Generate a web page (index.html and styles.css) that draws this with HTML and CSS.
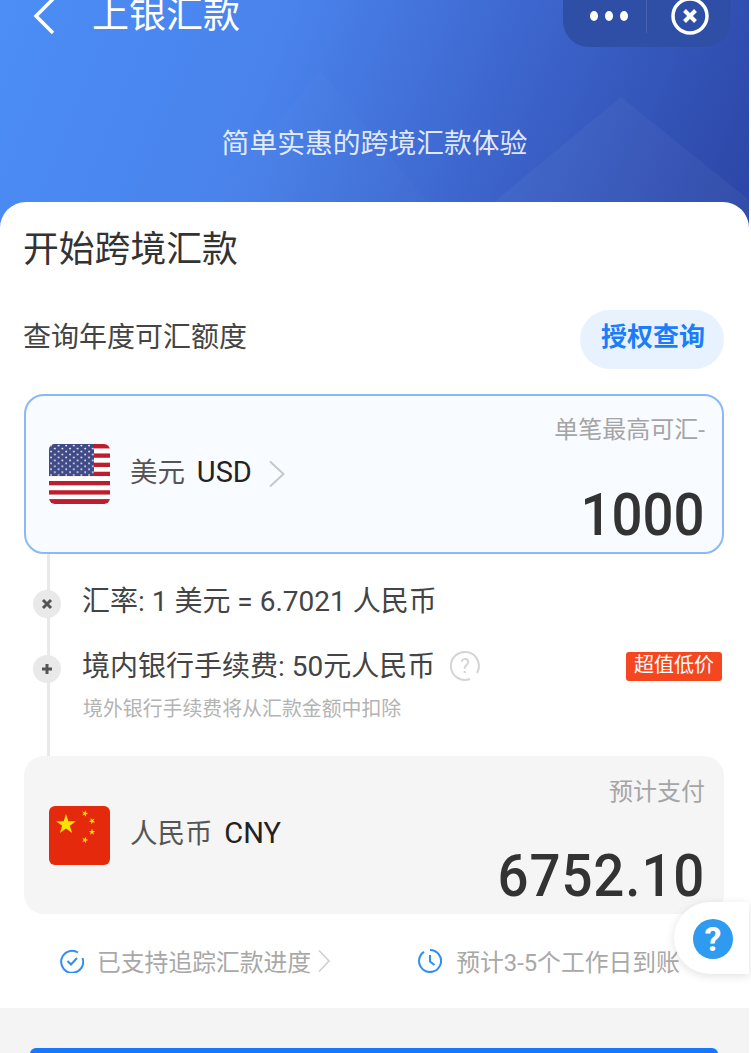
FILE: index.html
```html
<!DOCTYPE html>
<html lang="zh-CN">
<head>
  <meta charset="UTF-8">
  <meta name="viewport" content="width=device-width, initial-scale=1.0">
  <title>上银汇款</title>
  <link rel="stylesheet" href="styles.css">
</head>
<body>
<div class="page">
  <header class="hero">
    <svg class="hero-bg" width="749" height="230" viewBox="0 0 749 230">
      <polygon points="621,97 460,230 749,230 749,200" fill="#ffffff" fill-opacity="0.04"/>
      <polygon points="320,70 190,230 450,230" fill="#ffffff" fill-opacity="0.015"/>
    </svg>
    <div class="nav">
      <svg class="back" width="24" height="38" viewBox="0 0 24 38">
        <path d="M21 2 L4 19 L21 36" fill="none" stroke="#fff" stroke-width="3.5"/>
      </svg>
      <div class="nav-title">上银汇款</div>
      <div class="capsule">
        <div class="capsule-more"><i></i><i></i><i></i></div>
        <div class="capsule-line"></div>
        <svg class="capsule-close" width="40" height="40" viewBox="0 0 40 40">
          <circle cx="20" cy="20" r="17" fill="none" stroke="#fff" stroke-width="3.5"/>
          <path d="M14.5 14.5 L25.5 25.5 M25.5 14.5 L14.5 25.5" stroke="#fff" stroke-width="4"/>
        </svg>
      </div>
    </div>
    <div class="slogan">简单实惠的跨境汇款体验</div>
  </header>

  <main class="sheet">
    <h1 class="sheet-title">开始跨境汇款</h1>
    <div class="quota-row">
      <span class="quota-text">查询年度可汇额度</span>
      <button class="pill" type="button"><span>授权查询</span></button>
    </div>

    <section class="currency-card currency-card-from">
      <div class="currency">
        <svg class="flag" width="61" height="60" viewBox="0 0 61 61" preserveAspectRatio="none">
          <defs>
            <clipPath id="usClip"><rect width="61" height="61" rx="6"/></clipPath>
            <pattern id="stars" width="7.6" height="6" patternUnits="userSpaceOnUse">
              <circle cx="2" cy="1.6" r="0.95" fill="#fff"/>
              <circle cx="5.8" cy="4.6" r="0.95" fill="#fff"/>
            </pattern>
          </defs>
          <g clip-path="url(#usClip)">
            <rect width="61" height="61" fill="#fff"/>
            <rect y="0" width="61" height="4.5" fill="#bd1e2e"/>
            <rect y="9.6" width="61" height="4.4" fill="#bd1e2e"/>
            <rect y="19" width="61" height="4.4" fill="#bd1e2e"/>
            <rect y="28.2" width="61" height="4.4" fill="#bd1e2e"/>
            <rect y="37.6" width="61" height="4.4" fill="#bd1e2e"/>
            <rect y="47" width="61" height="4.4" fill="#bd1e2e"/>
            <rect y="56" width="61" height="5" fill="#bd1e2e"/>
            <rect width="45" height="32.5" fill="#3f4a87"/>
            <rect width="45" height="32.5" fill="url(#stars)"/>
          </g>
        </svg>
        <span class="currency-name">美元 <b>USD</b></span>
        <svg class="chevron" width="18" height="28" viewBox="0 0 18 28">
          <path d="M2 1.5 L15.5 14 L2 26.5" fill="none" stroke="#c8c8c8" stroke-width="2"/>
        </svg>
      </div>
      <div class="amount-box">
        <div class="amount-label">单笔最高可汇-</div>
        <div class="amount">1000</div>
      </div>
    </section>

    <section class="rates">
      <div class="rate-row rate-row-first">
        <span class="dot">
          <svg width="14" height="14" viewBox="0 0 14 14"><path d="M3 3 L11 11 M11 3 L3 11" stroke="#555" stroke-width="3"/></svg>
        </span>
        <span class="rate-text">汇率: 1 美元 = 6.7021 人民币</span>
      </div>
      <div class="rate-row">
        <span class="dot">
          <svg width="14" height="14" viewBox="0 0 14 14"><path d="M7 2 V12 M2 7 H12" stroke="#555" stroke-width="3"/></svg>
        </span>
        <span class="rate-text">境内银行手续费: 50元人民币</span>
        <svg class="q-icon" width="32" height="32" viewBox="0 0 32 32">
          <path d="M21 29 A14 14 0 1 1 28 23" fill="none" stroke="#d4d4d4" stroke-width="2"/>
          <text x="16" y="23" text-anchor="middle" class="q-text">?</text>
        </svg>
        <span class="badge">超值低价</span>
      </div>
      <div class="rate-note">境外银行手续费将从汇款金额中扣除</div>
    </section>

    <section class="currency-card currency-card-to">
      <div class="currency">
        <svg class="flag" width="61" height="59" viewBox="0 0 61 59">
          <defs>
            <polygon id="cnStar" points="0,-1 0.225,-0.31 0.95,-0.31 0.36,0.12 0.59,0.81 0,0.38 -0.59,0.81 -0.36,0.12 -0.95,-0.31 -0.225,-0.31"/>
          </defs>
          <rect width="61" height="59" rx="6" fill="#e5290c"/>
          <g fill="#fde200">
            <use href="#cnStar" transform="translate(17 18.5) scale(10.5)"/>
            <use href="#cnStar" transform="translate(36 7.5) scale(3.4) rotate(20)"/>
            <use href="#cnStar" transform="translate(43 15) scale(3.4) rotate(45)"/>
            <use href="#cnStar" transform="translate(43 26) scale(3.4)"/>
            <use href="#cnStar" transform="translate(36 34) scale(3.4) rotate(20)"/>
          </g>
        </svg>
        <span class="currency-name">人民币 <b>CNY</b></span>
      </div>
      <div class="amount-box">
        <div class="amount-label">预计支付</div>
        <div class="amount">6752.10</div>
      </div>
    </section>

    <div class="notes">
      <div class="note note-track">
        <svg width="24" height="24" viewBox="0 0 24 24">
          <path d="M18 3.5 A11 11 0 1 0 22.5 9" fill="none" stroke="#2f8ff0" stroke-width="2"/>
          <path d="M7.5 12 L11 15.5 L17 9" fill="none" stroke="#2f8ff0" stroke-width="2"/>
        </svg>
        <span>已支持追踪汇款进度</span>
        <svg width="14" height="24" viewBox="0 0 14 24">
          <path d="M2 1.5 L12 12 L2 22.5" fill="none" stroke="#cfcfcf" stroke-width="1.6"/>
        </svg>
      </div>
      <div class="note note-time">
        <svg width="24" height="24" viewBox="0 0 24 24">
          <path d="M6 2.8 A11 11 0 1 0 12 1 A11 11 0 0 1 19 3.5" fill="none" stroke="#2f8ff0" stroke-width="2"/>
          <path d="M12 6 V12.5 L16.5 16" fill="none" stroke="#2f8ff0" stroke-width="2"/>
        </svg>
        <span>预计3-5个工作日到账</span>
      </div>
    </div>
  </main>

  <div class="help">
    <span class="help-icon">?</span>
  </div>

  <footer class="footer">
    <div class="submit"></div>
  </footer>
</div>
</body>
</html>
```

FILE: styles.css
```css
* {
  box-sizing: border-box;
}
html, body {
  margin: 0;
  padding: 0;
}
body {
  font-family: Roboto, "Noto Sans CJK SC", sans-serif;
  background-color: #fff;
  color: #333;
}
.page {
  position: relative;
  width: 751px;
  height: 1053px;
  overflow: hidden;
  background-color: #fff;
}

/* top banner */
.hero {
  position: relative;
  width: 749px;
  height: 230px;
  background: linear-gradient(112deg, #4c8df6 0%, #4a83ec 35%, #3b62c9 68%, #2b45a5 100%);
  color: #fff;
  overflow: hidden;
}
.hero-bg {
  position: absolute;
  left: 0;
  top: 0;
}
.nav {
  position: relative;
  display: flex;
  align-items: center;
  height: 52px;
  margin-top: -10px;
  padding: 0 18px 0 32px;
}
.nav-title {
  margin-left: 36px;
  font-size: 37px;
  line-height: 52px;
  font-weight: 400;
}
.capsule {
  display: flex;
  align-items: center;
  width: 168px;
  height: 62px;
  margin-left: auto;
  padding-left: 27px;
  background-color: #2f4fa6;
  border-radius: 0 0 26px 26px;
}
.capsule-more {
  display: flex;
  gap: 7px;
}
.capsule-more i {
  display: block;
  width: 8px;
  height: 10px;
  border-radius: 50%;
  background-color: #fff;
}
.capsule-line {
  width: 1px;
  height: 34px;
  margin: 0 23px 0 18px;
  background-color: rgba(255, 255, 255, 0.12);
}
.capsule-close {
  flex: none;
}
.slogan {
  position: relative;
  margin-top: 84px;
  text-align: center;
  font-size: 27.8px;
  line-height: 36px;
  color: rgba(255, 255, 255, 0.85);
}

/* white sheet */
.sheet {
  position: relative;
  width: 749px;
  height: 806px;
  margin-top: -28px;
  padding: 26px 25px 0 24px;
  background-color: #fff;
  border-radius: 26px 26px 0 0;
}
.sheet-title {
  margin: 0 0 0 -1px;
  font-size: 35.8px;
  line-height: 44px;
  font-weight: 400;
  color: #333;
}
.quota-row {
  display: flex;
  justify-content: space-between;
  align-items: center;
  margin-top: 38px;
  font-size: 28px;
  color: #444;
}
.quota-text {
  margin: 0 0 10px -1px;
}
.pill {
  width: 144px;
  height: 59px;
  padding: 0 0 10px 2px;
  border: none;
  border-radius: 30px;
  background-color: #e8f2ff;
  color: #1b7dfa;
  font-family: inherit;
  font-size: 26px;
  font-weight: 700;
}

.currency-card {
  display: flex;
  justify-content: space-between;
  align-items: center;
  height: 160px;
  border-radius: 20px;
  padding: 0 19px 0 25px;
}
.currency-card-from {
  margin-top: 25px;
  border: 2px solid #8ab9fb;
  background-color: #f8fbff;
  padding: 0 17px 0 23px;
}
.currency-card-to {
  height: 158px;
  background-color: #f5f5f5;
}
.currency {
  display: flex;
  align-items: center;
}
.flag {
  display: block;
  flex: none;
}
.currency-name {
  margin: 0 0 8px 20px;
  font-size: 27.5px;
  color: #555;
}
.currency-name b {
  margin-left: 5px;
  font-size: 29px;
  font-weight: 400;
  color: #222;
}
.chevron {
  margin: 0 0 0 16px;
}
.amount-box {
  align-self: flex-start;
  padding-top: 19px;
  text-align: right;
}
.amount-label {
  font-size: 24px;
  line-height: 30px;
  color: #a5a5a5;
}
.amount {
  margin-top: 40px;
  font-size: 60px;
  line-height: 60px;
  font-weight: 500;
  color: #333;
  transform: scaleX(0.91);
  transform-origin: right center;
}
.currency-card-to .amount-box {
  padding-top: 21px;
}
.currency-card-to .amount {
  margin-top: 39px;
  letter-spacing: 1px;
}

/* rate timeline */
.rates {
  position: relative;
  height: 202px;
  padding-left: 9px;
  padding-top: 28px;
  font-size: 28px;
  color: #444;
}
.rates::before {
  content: "";
  position: absolute;
  left: 23px;
  top: 0;
  bottom: 0;
  width: 3px;
  background-color: #e9e9e9;
}
.rate-row {
  position: relative;
  display: flex;
  align-items: center;
  height: 40px;
  margin-top: 25px;
}
.rate-row-first {
  margin-top: 0;
}
.rate-text {
  margin-bottom: 1px;
  line-height: 36px;
}
.dot {
  display: flex;
  align-items: center;
  justify-content: center;
  width: 28px;
  height: 28px;
  margin: 4px 21px 0 0;
  border-radius: 50%;
  background-color: #e9e9e9;
}
.q-icon {
  margin: 0 0 2px 14px;
}
.q-text {
  font-size: 20px;
  fill: #d4d4d4;
}
.badge {
  margin: -1px 2px 0 auto;
  width: 96px;
  height: 29px;
  border-radius: 3px;
  background-color: #f4471f;
  color: #fff;
  font-size: 20px;
  line-height: 27px;
  text-align: center;
}
.rate-note {
  margin-top: 9px;
  padding-left: 50px;
  font-size: 19.9px;
  line-height: 28px;
  color: #b3b3b3;
}

/* bottom notes */
.notes {
  display: flex;
  align-items: center;
  height: 94px;
  padding-left: 36px;
  font-size: 23.8px;
  color: #a8a8a8;
}
.note {
  display: flex;
  align-items: center;
  white-space: nowrap;
}
.note span {
  margin: 0 6px 2px 14px;
}
.note-track span {
  margin-left: 13px;
}
.note-time {
  margin-left: 87px;
}

.help {
  position: absolute;
  left: 674px;
  top: 902px;
  width: 75px;
  height: 72px;
  padding: 17px 0 0 19px;
  border-radius: 36px 0 0 36px;
  background-color: #fff;
  box-shadow: 0 2px 10px rgba(0, 0, 0, 0.12);
}
.help-icon {
  display: block;
  width: 40px;
  height: 40px;
  border-radius: 50%;
  background-color: #2f9bf0;
  color: #fff;
  font-size: 34px;
  font-weight: 700;
  line-height: 40px;
  text-align: center;
}

.footer {
  width: 749px;
  height: 47px;
  padding: 40px 31px 0 30px;
  background-color: #f4f4f4;
}
.submit {
  height: 40px;
  border-radius: 6px 6px 0 0;
  background-color: #1677ff;
}
```
